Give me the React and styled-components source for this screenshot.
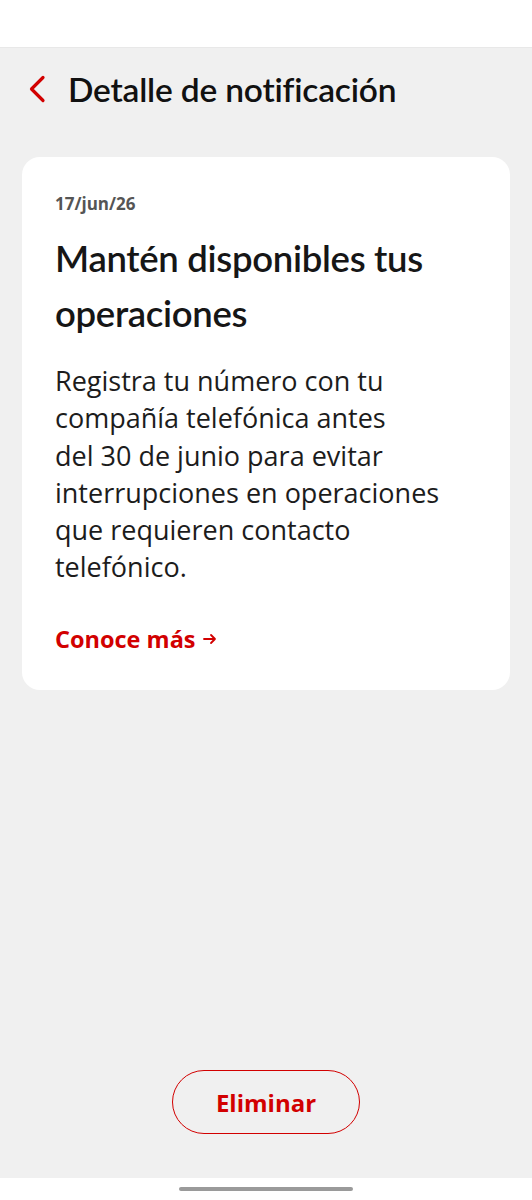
import React from "react";
import styled, { createGlobalStyle } from "styled-components";

const GlobalStyle = createGlobalStyle`
  html, body {
    margin: 0;
    padding: 0;
    background: #ffffff;
    font-family: "Open Sans", Lato, sans-serif;
  }
  * { box-sizing: border-box; }
`;

const Screen = styled.div`
  width: 532px;
  height: 1200px;
  display: flex;
  flex-direction: column;
  background: #ffffff;
`;

const StatusBar = styled.div`
  height: 48px;
  background: #ffffff;
  border-bottom: 1px solid #e8e8e8;
`;

const Main = styled.main`
  flex: 1;
  background: #f0f0f0;
  display: flex;
  flex-direction: column;
  padding: 0 22px;
`;

const Header = styled.header`
  display: flex;
  align-items: center;
  height: 82px;
  padding-left: 6px;
  gap: 22px;
`;

const BackButton = styled.button`
  border: none;
  background: none;
  padding: 0;
  width: 18px;
  height: 28px;
  display: flex;
  align-items: center;
  cursor: pointer;
`;

const HeaderTitle = styled.h1`
  margin: 0;
  font-family: Lato, "Open Sans", sans-serif;
  font-size: 33.5px;
  font-weight: 600;
  color: #111111;
  letter-spacing: -0.2px;
`;

const Card = styled.section`
  margin-top: 27px;
  background: #ffffff;
  border-radius: 18px;
  padding: 36px 33px 34px 33px;
`;

const DateText = styled.div`
  font-size: 17px;
  font-weight: 700;
  color: #555555;
  line-height: 22px;
`;

const CardTitle = styled.h2`
  margin: 16px 0 0;
  font-family: Lato, "Open Sans", sans-serif;
  font-size: 36.5px;
  font-weight: 600;
  line-height: 55px;
  color: #161616;
  letter-spacing: -0.3px;
`;

const Body = styled.p`
  margin: 21px 0 0;
  font-size: 27px;
  line-height: 37.3px;
  color: #1c1c1c;
  font-weight: 400;
`;

const MoreLink = styled.a`
  display: inline-flex;
  align-items: center;
  gap: 7px;
  margin-top: 36px;
  font-size: 23.5px;
  font-weight: 700;
  color: #d20000;
  text-decoration: none;
  line-height: 34px;
`;

const Spacer = styled.div`
  flex: 1;
`;

const ButtonRow = styled.div`
  display: flex;
  justify-content: center;
  padding-bottom: 44px;
`;

const DeleteButton = styled.button`
  width: 188px;
  height: 64px;
  border: 1.5px solid #d20000;
  border-radius: 32px;
  background: transparent;
  color: #d20000;
  font-family: inherit;
  font-size: 24px;
  font-weight: 700;
  cursor: pointer;
`;

const NavBar = styled.div`
  height: 22px;
  background: #ffffff;
  display: flex;
  justify-content: center;
  padding-top: 9px;
`;

const Handle = styled.div`
  width: 174px;
  height: 4px;
  border-radius: 2px;
  background: #9a9a9a;
`;

function ChevronLeft() {
  return (
    <svg width="18" height="28" viewBox="0 0 18 28" fill="none">
      <path d="M15 2.5 L3.5 14 L15 25.5" stroke="#d20000" strokeWidth="3.2" strokeLinecap="round" strokeLinejoin="round" />
    </svg>
  );
}

function Arrow() {
  return (
    <svg width="14" height="12" viewBox="0 0 14 12" fill="none">
      <path d="M1 6 H12 M8 2 L12 6 L8 10" stroke="#d20000" strokeWidth="1.8" strokeLinecap="round" strokeLinejoin="round" />
    </svg>
  );
}

export default function App() {
  return (
    <>
      <GlobalStyle />
      <Screen>
        <StatusBar />
        <Main>
          <Header>
            <BackButton aria-label="Regresar">
              <ChevronLeft />
            </BackButton>
            <HeaderTitle>Detalle de notificación</HeaderTitle>
          </Header>
          <Card>
            <DateText>17/jun/26</DateText>
            <CardTitle>
              Mantén disponibles tus
              <br />
              operaciones
            </CardTitle>
            <Body>
              Registra tu número con tu
              <br />
              compañía telefónica antes
              <br />
              del 30 de junio para evitar
              <br />
              interrupciones en operaciones
              <br />
              que requieren contacto
              <br />
              telefónico.
            </Body>
            <MoreLink href="#">
              Conoce más <Arrow />
            </MoreLink>
          </Card>
          <Spacer />
          <ButtonRow>
            <DeleteButton>Eliminar</DeleteButton>
          </ButtonRow>
        </Main>
        <NavBar>
          <Handle />
        </NavBar>
      </Screen>
    </>
  );
}
